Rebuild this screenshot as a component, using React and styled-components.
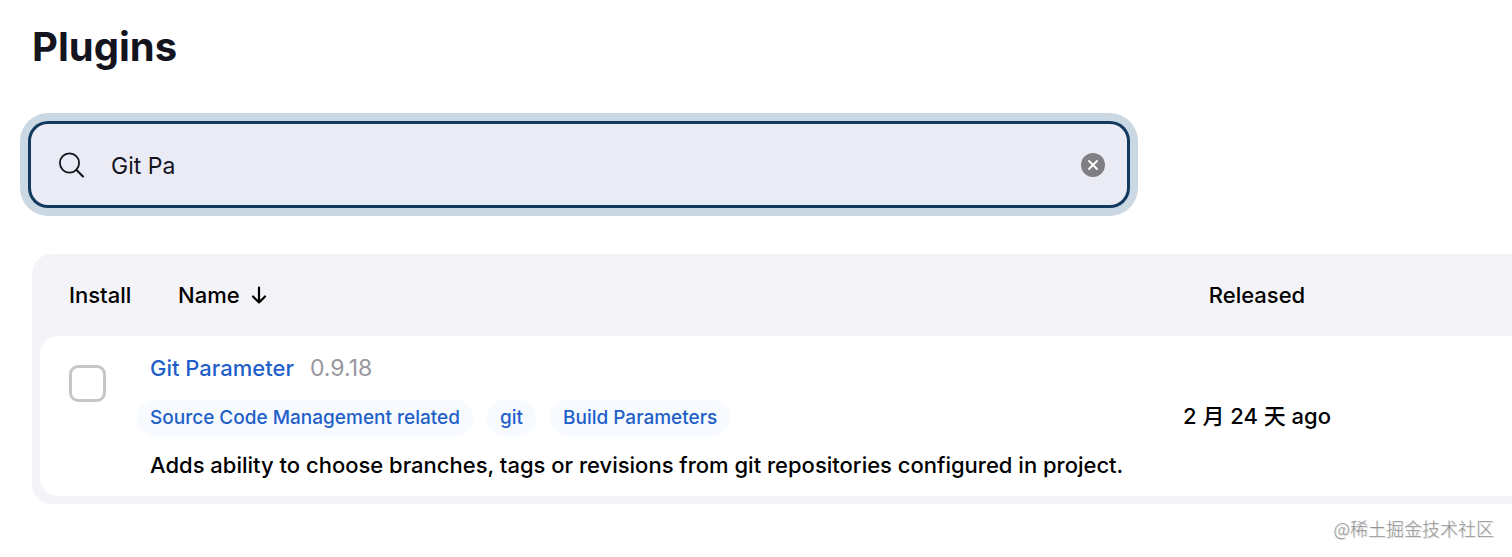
import React, { useState } from 'react';
import styled, { createGlobalStyle } from 'styled-components';

const GlobalStyle = createGlobalStyle`
  * {
    box-sizing: border-box;
  }

  body {
    margin: 0;
    background: #fff;
    color: #000;
    font-family: Inter, 'Noto Sans CJK SC', sans-serif;
    font-size: 22px;
    font-weight: 500;
    line-height: 32px;
  }
`;

const Page = styled.main`
  display: flex;
  flex-direction: column;
  padding: 20px 0 0 32px;
`;

const Title = styled.h1`
  margin: 0 0 51px;
  font-size: 40px;
  font-weight: 700;
  line-height: 54px;
  color: #14141f;
`;

const SearchBar = styled.form`
  display: flex;
  align-items: center;
  gap: 26px;
  height: 79px;
  margin: 0 386px 50px 0;
  padding: 0 21px 0 26px;
  border-radius: 16px;
  background: #ebebf5;
  box-shadow: 0 0 0 1px #ebebf5, 0 0 0 4px #113a5e, 0 0 0 12px #cad8e4;
`;

const SearchIcon = styled.svg`
  flex: none;
  width: 27px;
  height: 27px;
`;

const SearchInput = styled.input`
  flex: 1;
  min-width: 0;
  padding: 2px 0 0;
  border: 0;
  outline: 0;
  background: transparent;
  color: #14141f;
  font: inherit;
  font-size: 23px;
  font-weight: 400;
`;

const ClearButton = styled.button`
  display: flex;
  padding: 0;
  border: 0;
  border-radius: 50%;
  background: #808084;
  cursor: pointer;
`;

const TablePane = styled.div`
  padding: 0 0 8px 8px;
  border-radius: 20px 0 0 20px;
  background: #f4f3f8;
`;

const PluginTable = styled.table`
  width: 100%;
  border-collapse: separate;
  border-spacing: 0;
`;

const HeadCell = styled.th`
  width: ${props => props.$width || 'auto'};
  height: 82px;
  padding: ${props => props.$padding || '0'};
  font-weight: 500;
  text-align: ${props => props.$align || 'left'};
`;

const SortButton = styled.button`
  display: flex;
  align-items: center;
  gap: 10px;
  padding: 0;
  border: 0;
  background: transparent;
  color: inherit;
  font: inherit;
  cursor: pointer;
`;

const Cell = styled.td`
  height: 160px;
  padding: ${props => props.$padding || '0'};
  background: #fff;
  text-align: ${props => props.$align || 'left'};
  vertical-align: ${props => props.$valign || 'middle'};

  &:first-child {
    border-radius: 18px 0 0 18px;
  }
`;

const Checkbox = styled.input`
  appearance: none;
  display: block;
  width: 37px;
  height: 37px;
  margin: 0;
  border: 3px solid #c4c6c8;
  border-radius: 9px;
  background: #fff;

  &:checked {
    border-color: #113a5e;
    background: #113a5e;
  }
`;

const PluginName = styled.div`
  display: flex;
  gap: 16px;
`;

const PluginLink = styled.a`
  color: #1f5fc9;
  text-decoration: none;
`;

const Version = styled.span`
  color: #97979d;
  font-size: 23px;
  font-weight: 400;
`;

const Tags = styled.div`
  display: flex;
  gap: 14px;
  margin: 16px 0 13px -13px;
`;

const Tag = styled.a`
  padding: 2px 13px;
  border-radius: 18px;
  background: #f7fafe;
  color: #1f5fc9;
  font-size: 19px;
  text-decoration: none;
`;

const Description = styled.div`
  white-space: nowrap;
`;

const Credit = styled.footer`
  padding: 8px 18px 0 0;
  color: #959595;
  font-family: 'Noto Sans CJK SC', sans-serif;
  font-size: 18px;
  font-weight: 300;
  text-align: right;
  text-shadow: 1px 1px 1px #d8d8d8;
`;

const plugins = [
  {
    name: 'Git Parameter',
    version: '0.9.18',
    tags: ['Source Code Management related', 'git', 'Build Parameters'],
    description: 'Adds ability to choose branches, tags or revisions from git repositories configured in project.',
    released: '2 月 24 天 ago'
  }
];

function PluginRow({ plugin }) {
  return (
    <tr>
      <Cell $padding="29px 0 0 29px" $valign="top">
        <Checkbox type="checkbox" aria-label={`Install ${plugin.name}`} />
      </Cell>
      <Cell $padding="16px 0 0" $valign="top">
        <PluginName>
          <PluginLink href="#plugin">{plugin.name}</PluginLink>
          <Version>{plugin.version}</Version>
        </PluginName>
        <Tags>
          {plugin.tags.map(tag => (
            <Tag key={tag} href="#tag">{tag}</Tag>
          ))}
        </Tags>
        <Description>{plugin.description}</Description>
      </Cell>
      <Cell $padding="0 152px 0 0" $align="center">{plugin.released}</Cell>
    </tr>
  );
}

function App() {
  const [query, setQuery] = useState('Git Pa');

  return (
    <Page>
      <GlobalStyle />
      <Title>Plugins</Title>

      <SearchBar role="search" onSubmit={e => e.preventDefault()}>
        <SearchIcon viewBox="0 0 27 27" fill="none" stroke="#14141f" strokeWidth="1.8" aria-hidden="true">
          <circle cx="11.5" cy="12" r="9.6" />
          <path d="M18.3 18.8L25 25.5" strokeWidth="2.1" strokeLinecap="round" />
        </SearchIcon>
        <SearchInput
          type="text"
          aria-label="Search plugins"
          value={query}
          onChange={e => setQuery(e.target.value)}
        />
        <ClearButton type="button" aria-label="Clear" onClick={() => setQuery('')}>
          <svg width="24" height="24" viewBox="0 0 24 24" stroke="#fff" strokeWidth="1.8" strokeLinecap="round">
            <path d="M8 8l8 8M16 8l-8 8" />
          </svg>
        </ClearButton>
      </SearchBar>

      <TablePane>
        <PluginTable>
          <thead>
            <tr>
              <HeadCell $width="110px" $padding="0 0 0 29px">Install</HeadCell>
              <HeadCell $padding="0 0 0 28px">
                <SortButton type="button">
                  Name
                  <svg width="18" height="20" viewBox="0 0 18 20" fill="none" stroke="#000" strokeWidth="2.2" strokeLinecap="round" strokeLinejoin="round">
                    <path d="M9 2.5v15M3 11.5l6 6 6-6" />
                  </svg>
                </SortButton>
              </HeadCell>
              <HeadCell $width="358px" $padding="0 152px 0 0" $align="center">Released</HeadCell>
            </tr>
          </thead>
          <tbody>
            {plugins.map(plugin => (
              <PluginRow key={plugin.name} plugin={plugin} />
            ))}
          </tbody>
        </PluginTable>
      </TablePane>

      <Credit>@稀土掘金技术社区</Credit>
    </Page>
  );
}

export default App;
